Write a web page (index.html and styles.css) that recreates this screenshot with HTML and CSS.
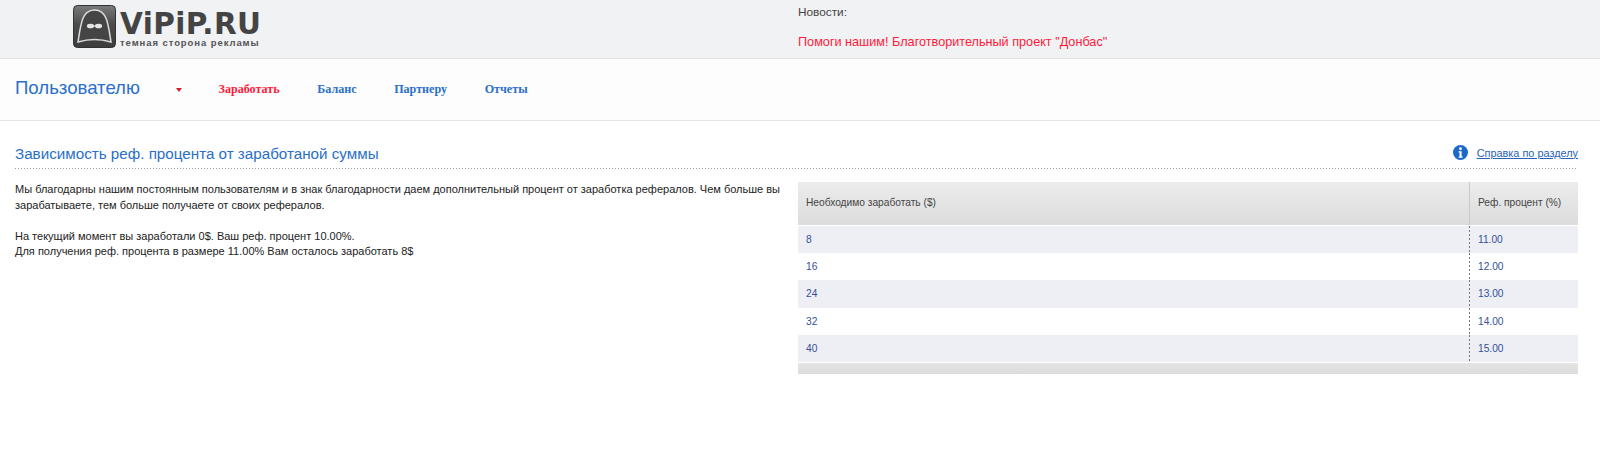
FILE: index.html
```html
<!DOCTYPE html>
<html lang="ru">
<head>
<meta charset="utf-8">
<title>VIPIP.RU</title>
<link rel="stylesheet" href="styles.css">
</head>
<body>
<header class="top">
  <div class="logo">
    <svg class="logo-icon" width="43" height="43" viewBox="0 0 43 43">
      <defs>
        <linearGradient id="lg" x1="0" y1="0" x2="0" y2="1"><stop offset="0" stop-color="#7a7a7a"/><stop offset=".45" stop-color="#4c4c4c"/><stop offset="1" stop-color="#3c3c3c"/></linearGradient>
      </defs>
      <rect x=".5" y=".5" width="42" height="42" rx="4" fill="url(#lg)" stroke="#333"/>
      <path d="M5 37 C6.5 28 7 22 9.5 14.5 C12 7.5 16.5 5 21.5 5 C26.5 5 31 7.5 33.5 14.5 C36 22 36.5 28 38 37 C28 34 15 34 5 37 Z" fill="#454545" stroke="#dcdcdc" stroke-width="1.5"/>
      <ellipse cx="17.5" cy="21" rx="3.6" ry="2.3" fill="#e6e6e6"/>
      <ellipse cx="25.5" cy="21" rx="3.6" ry="2.3" fill="#e6e6e6"/>
      <path d="M21 21h1" stroke="#e6e6e6"/>
    </svg>
    <div class="logo-text">
      <div class="logo-name">ViPiP.RU</div>
      <div class="logo-tag">темная сторона рекламы</div>
    </div>
  </div>
  <div class="news">
    <div class="news-label">Новости:</div>
    <a class="news-link" href="#">Помоги нашим! Благотворительный проект "Донбас"</a>
  </div>
</header>
<nav class="nav">
  <a class="nav-title" href="#">Пользователю</a>
  <span class="caret"></span>
  <a class="nav-item nav-red" href="#">Заработать</a>
  <a class="nav-item" href="#">Баланс</a>
  <a class="nav-item" href="#">Партнеру</a>
  <a class="nav-item" href="#">Отчеты</a>
</nav>
<main class="main">
  <div class="head">
    <h1 class="title">Зависимость реф. процента от заработаной суммы</h1>
    <div class="help">
      <svg class="help-icon" width="15" height="15" viewBox="0 0 16 16">
        <circle cx="8" cy="8" r="8" fill="#1b6ac9"/>
        <circle cx="8" cy="4" r="1.5" fill="#fff"/>
        <path d="M6 6.6h3.2v5.6h1v1.3H6v-1.3h1v-4.3H6z" fill="#fff"/>
      </svg>
      <a class="help-link" href="#">Справка по разделу</a>
    </div>
  </div>
  <div class="cols">
    <div class="text">
      <p class="para">Мы благодарны нашим постоянным пользователям и в знак благодарности даем дополнительный процент от заработка рефералов. Чем больше вы зарабатываете, тем больше получаете от своих рефералов.</p>
      <p class="para">На текущий момент вы заработали 0$. Ваш реф. процент 10.00%.<br>Для получения реф. процента в размере 11.00% Вам осталось заработать 8$</p>
    </div>
    <div class="tbl">
      <div class="thead">
        <div class="c1">Необходимо заработать ($)</div>
        <div class="c2">Реф. процент (%)</div>
      </div>
      <div class="row alt"><div class="c1">8</div><div class="c2">11.00</div></div>
      <div class="row"><div class="c1">16</div><div class="c2">12.00</div></div>
      <div class="row alt"><div class="c1">24</div><div class="c2">13.00</div></div>
      <div class="row"><div class="c1">32</div><div class="c2">14.00</div></div>
      <div class="row alt"><div class="c1">40</div><div class="c2">15.00</div></div>
      <div class="tfoot"></div>
    </div>
  </div>
</main>
</body>
</html>
```
FILE: styles.css
```css
* { box-sizing: border-box; }
html, body { margin: 0; padding: 0; }
body { background: #fff; font-family: "Liberation Sans", Arial, sans-serif; font-size: 11px; color: #222; height: 457px; overflow: hidden; }
a { text-decoration: none; }

.top { height: 59px; background: #f1f2f4; border-bottom: 1px solid #e2e3e5; display: flex; }
.logo { width: 798px; padding: 5px 0 0 73px; display: flex; align-items: flex-start; gap: 4px; }
.logo-icon { display: block; flex: none; }
.logo-text { color: #444; padding-top: 6px; }
.logo-name { font-family: "DejaVu Sans", "Liberation Sans", sans-serif; font-weight: 700; font-size: 29.5px; line-height: 27px; height: 27px; letter-spacing: .4px; white-space: nowrap; }
.logo-tag { font-size: 9.5px; line-height: 10px; font-weight: 700; letter-spacing: .92px; color: #555; white-space: nowrap; }
.news-label { margin-top: 5px; line-height: 14px; color: #444; font-size: 11.8px; }
.news-link { display: block; margin-top: 16px; line-height: 14px; color: #ff1a3c; font-size: 12.66px; }

.nav { height: 62px; background: #fdfdfd; border-bottom: 1px solid #e5e5e5; display: flex; align-items: center; padding: 0 0 0 15px; }
.nav-title { font-size: 18.6px; color: #2a6fc9; width: 161px; margin-bottom: 4px; }
.caret { width: 0; height: 0; border-left: 3.5px solid transparent; border-right: 3.5px solid transparent; border-top: 4px solid #d0202a; margin-right: 36.5px; }
.nav-item { font-family: "Liberation Serif", serif; font-weight: 700; font-size: 12.1px; color: #2a6fc9; margin-right: 37.6px; }
.nav-red { color: #ff1a3c; }

.main { padding: 0 22px 0 15px; }
.head { display: flex; justify-content: space-between; align-items: center; height: 48px; padding-top: 18px; padding-bottom: 1px; background: repeating-linear-gradient(90deg, #999 0 1px, transparent 1px 3px) left bottom / 100% 1px no-repeat; }
.title { margin: 0; font-size: 15.2px; font-weight: 400; color: #2a6fc9; }
.help { display: flex; align-items: center; gap: 9px; margin-bottom: 2px; }
.help-link { color: #2a62b8; font-size: 10.9px; text-decoration: underline; }
.help-icon { display: block; }

.cols { display: flex; margin-top: 13px; }
.text { width: 783px; flex: none; }
.para { margin: 0 0 15.5px; line-height: 15.5px; font-size: 11px; color: #222; width: 770px; }

.tbl { width: 780px; font-size: 10.2px; }
.thead { display: flex; height: 43px; align-items: center; color: #444; background: linear-gradient(#ececec, #dcdcdc); margin-bottom: 1px; }
.thead .c1, .thead .c2 { height: 100%; display: flex; align-items: center; padding-bottom: 3px; }
.thead .c1 { border-right: 1px solid #c9c9c9; }
.c1 { width: 672px; padding-left: 8px; flex: none; }
.c2 { flex: 1; padding-left: 8px; }
.row { display: flex; height: 27.2px; align-items: center; color: #34509a; }
.row .c1 { height: 100%; display: flex; align-items: center; background: repeating-linear-gradient(180deg, #777 0 2px, transparent 2px 4px) right top / 1px 100% no-repeat; }
.row .c2 { height: 100%; display: flex; align-items: center; }
.alt { background: #eeeff4; }
.tfoot { height: 11px; margin-top: 1px; background: linear-gradient(#e4e4e4, #dcdcdc); }
```
